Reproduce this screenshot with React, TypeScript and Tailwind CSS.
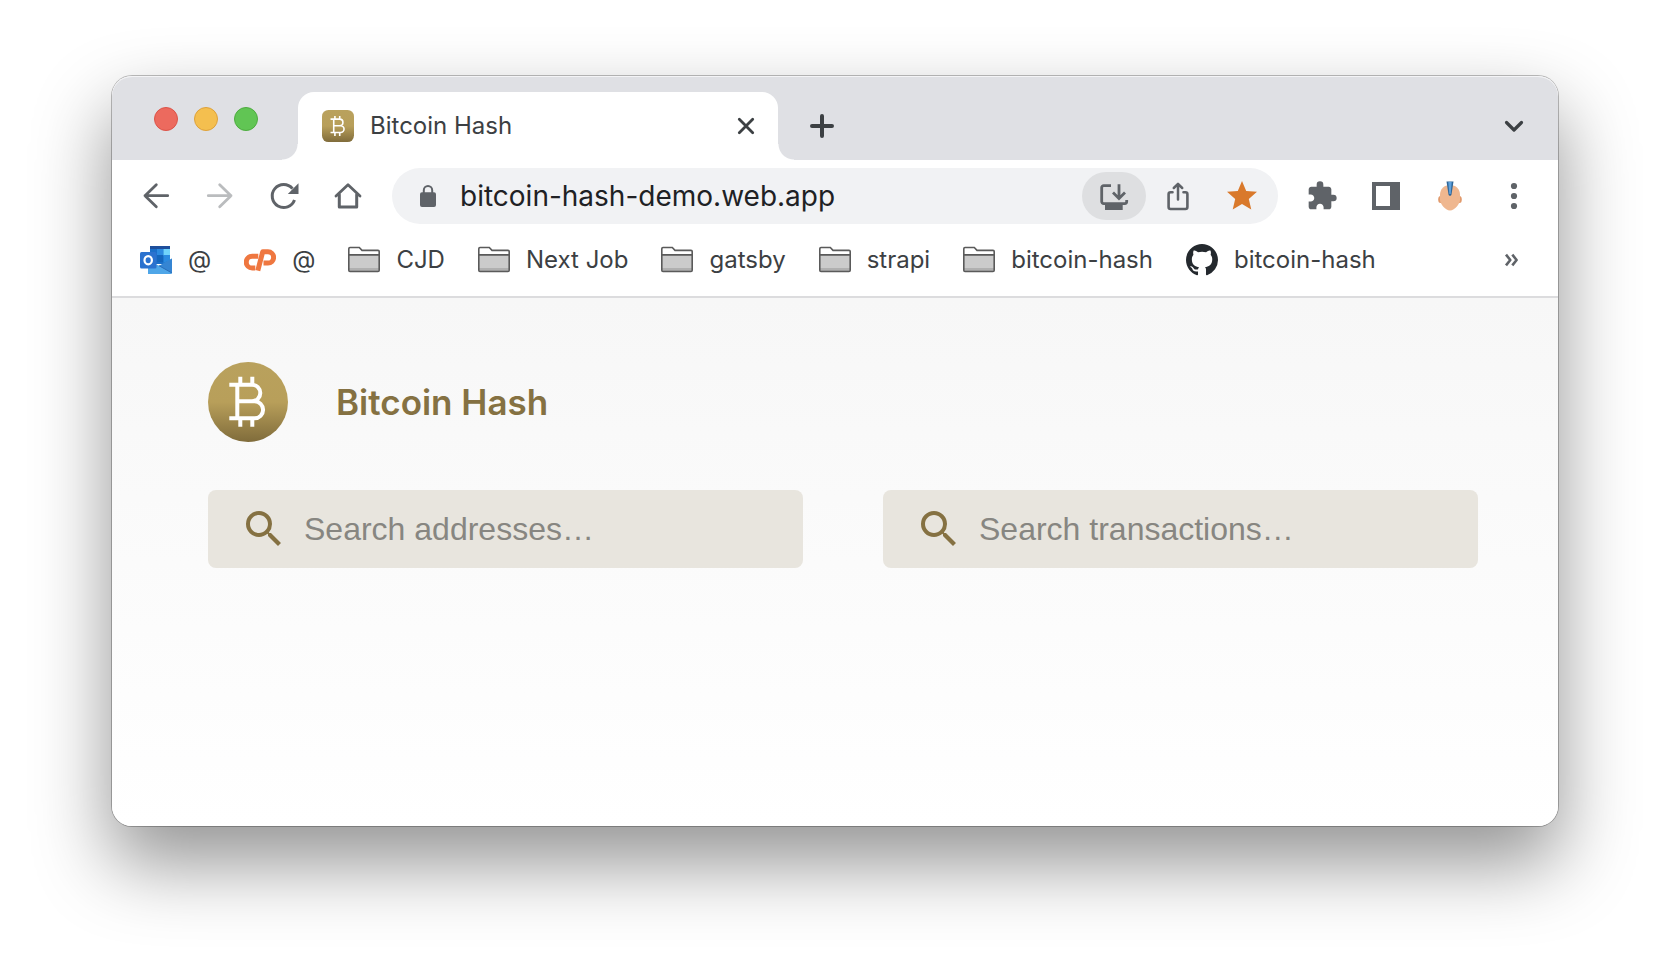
import React, { useId } from "react";
import { MdExtension, MdSearch, MdStar } from "react-icons/md";

function Glyph({ children, className = "" }: { children: React.ReactNode; className?: string }) {
  return (
    <svg
      viewBox="0 0 32 32"
      aria-hidden="true"
      className={`size-8 shrink-0 fill-none stroke-current ${className}`}
      strokeWidth="2.8"
      strokeLinecap="round"
      strokeLinejoin="round"
    >
      {children}
    </svg>
  );
}

function BitcoinMark({ square = false, className }: { square?: boolean; className: string }) {
  const id = useId();
  return (
    <svg viewBox="0 0 80 80" aria-hidden="true" className={`shrink-0 ${className}`}>
      <defs>
        <linearGradient id={id} x1="0" y1="0" x2="0" y2="1">
          <stop offset="0" stopColor="#b9a15d" />
          <stop offset="0.5" stopColor="#b89f5a" />
          <stop offset="1" stopColor="#806c3b" />
        </linearGradient>
      </defs>
      <rect width="80" height="80" rx={square ? 16 : 40} fill={`url(#${id})`} />
      <path
        d="M21.3 22.7H44a8.3 8.3 0 0 1 0 16.6H30M44 39.3h2.6a8.5 8.5 0 0 1 0 17H21.3M29.3 22.7v33.6M32.3 14.7v8M44.3 14.7v8M32.3 56.3v8.4M44.3 56.3v8.4"
        fill="none"
        stroke="#fff"
        strokeWidth="4"
      />
    </svg>
  );
}

function FolderIcon() {
  return (
    <svg viewBox="0 0 32 32" aria-hidden="true" className="size-8 shrink-0">
      <path d="M1 11h30v13H1z" fill="#cbcbcb" />
      <path d="M1 24h30v2.500H1z" fill="#b0b0b0" />
      <path
        d="M.8 26V4.500c0-.8.500-1.200 1.200-1.200h9.300L14 6.200h16c.8 0 1.200.4 1.200 1.200V26c0 .8-.4 1.200-1.200 1.200H2c-.7 0-1.200-.4-1.200-1.200zM1 10.700h30"
        transform="translate(0 .2)"
        fill="none"
        stroke="#5a5a5a"
        strokeWidth="1.600"
      />
    </svg>
  );
}

function OutlookIcon() {
  return (
    <svg viewBox="0 0 32 32" aria-hidden="true" className="size-8 shrink-0">
      <path d="M10 3.500A1.500 1.500 0 0 1 11.500 2h17A1.500 1.500 0 0 1 30 3.500V20H10z" fill="#1a6fc9" />
      <path d="M10 2h20v3H10z" fill="#1e4f9c" />
      <path d="M17 5h6.500v6H17z" fill="#2c8ae0" />
      <path d="M23.500 5H30v7h-6.500z" fill="#70d4fb" />
      <path d="M17 11h6.500v7H17z" fill="#1466bd" />
      <path d="M23.500 11H30v5l-6.500 3z" fill="#2b8be0" />
      <path d="M8 17l12 5 12-7.500V28.500a1.500 1.500 0 0 1-1.500 1.500H8z" fill="#4fa6e8" />
      <path d="M32 14.500V29L19 21.700z" fill="#3585d3" />
      <path d="M19 21.700 32 29" fill="none" stroke="#2a6db8" strokeWidth="1" />
      <rect x="0" y="8" width="16.500" height="16.500" rx="1.500" fill="#2b72cf" />
      <ellipse cx="8.200" cy="16.200" rx="3.700" ry="4.100" fill="none" stroke="#fff" strokeWidth="2.200" />
    </svg>
  );
}

function CpanelIcon() {
  return (
    <svg
      viewBox="0 0 32 32"
      aria-hidden="true"
      className="size-8 shrink-0 fill-none stroke-[#ef7740]"
      strokeWidth="5"
      strokeLinejoin="round"
    >
      <path d="M14.300 12.200H8.200a5.800 5.800 0 0 0 0 11.900h3.100" />
      <path d="M13.800 26.700 18.700 7.800H24a5.500 5.500 0 0 1 0 11.200h-4.500" />
    </svg>
  );
}

function GithubIcon() {
  return (
    <svg viewBox="0 0 16 16" aria-hidden="true" className="size-8 shrink-0 fill-[#24292e]">
      <path d="M8 0C3.58 0 0 3.58 0 8c0 3.54 2.29 6.53 5.47 7.59.4.07.55-.17.55-.38 0-.19-.01-.82-.01-1.49-2.01.37-2.53-.49-2.69-.94-.09-.23-.48-.94-.82-1.13-.28-.15-.68-.52-.01-.53.63-.01 1.08.58 1.23.82.72 1.21 1.87.87 2.33.66.07-.52.28-.87.51-1.07-1.78-.2-3.64-.89-3.64-3.95 0-.87.31-1.59.82-2.15-.08-.2-.36-1.02.08-2.12 0 0 .67-.21 2.2.82.64-.18 1.32-.27 2-.27.68 0 1.36.09 2 .27 1.53-1.04 2.2-.82 2.2-.82.44 1.1.16 1.92.08 2.12.51.56.82 1.27.82 2.15 0 3.07-1.87 3.75-3.65 3.95.29.25.54.73.54 1.48 0 1.07-.01 1.93-.01 2.2 0 .21.15.46.55.38A8.013 8.013 0 0 0 16 8c0-4.42-3.58-8-8-8z" />
    </svg>
  );
}

function TabStrip() {
  return (
    <header className="flex h-[84px] items-end rounded-t-[20px] bg-[#dfe0e4] pr-7 shadow-[inset_0_1px_0_#f4f4f6]">
      <div className="mb-[29px] flex gap-4 pl-[42px]">
        <button aria-label="Close window" className="size-6 rounded-full border border-[#dc5348] bg-[#ec6a5e]" />
        <button aria-label="Minimize window" className="size-6 rounded-full border border-[#dea13a] bg-[#f4bf4f]" />
        <button aria-label="Zoom window" className="size-6 rounded-full border border-[#4dac3f] bg-[#61c554]" />
      </div>
      <span className="ml-6 size-4 bg-[radial-gradient(circle_at_0_0,#dfe0e4_15px,#fff_16px)]" />
      <div className="flex h-[68px] w-[480px] items-center gap-4 rounded-t-2xl bg-white pr-4 pl-6">
        <BitcoinMark square className="size-8" />
        <span className="flex-1 text-2xl text-[#3c4043]">Bitcoin Hash</span>
        <button aria-label="Close tab" className="text-[#3c4043]">
          <Glyph>
            <path d="m9.300 9.300 13.400 13.400m0-13.400L9.300 22.700" />
          </Glyph>
        </button>
      </div>
      <span className="size-4 bg-[radial-gradient(circle_at_100%_0,#dfe0e4_15px,#fff_16px)]" />
      <button aria-label="New tab" className="mb-[18px] ml-3 text-[#3c4043]">
        <Glyph>
          <path d="M16 6v20M6 16h20" strokeWidth="4" />
        </Glyph>
      </button>
      <button aria-label="Search tabs" className="mb-[18px] ml-auto text-[#3c4043]">
        <Glyph>
          <path d="m8.500 12.500 7.500 7.500 7.500-7.500" strokeWidth="3.200" />
        </Glyph>
      </button>
    </header>
  );
}

function Toolbar() {
  return (
    <div className="flex items-center gap-8 pt-2 pr-7 pl-7 text-[#5f6368]">
      <button aria-label="Back">
        <Glyph>
          <path d="M27.700 15.700H5M16.300 4.700l-11.300 11 11.300 11" />
        </Glyph>
      </button>
      <button aria-label="Forward" className="text-[#babcbe]">
        <Glyph>
          <path d="M4.300 15.700H27M15.700 4.700l11.300 11-11.300 11" />
        </Glyph>
      </button>
      <button aria-label="Reload">
        <Glyph>
          <path d="M24.500 8.600A11.500 11.500 0 1 0 26.500 20" strokeLinecap="butt" strokeWidth="3" />
          <path d="M30.500 3.300V14H19.800z" fill="currentColor" stroke="none" />
        </Glyph>
      </button>
      <button aria-label="Home">
        <Glyph>
          <path d="M4 16 16 4.800 28 16" />
          <path d="M7.300 14.500V27h17.400V14.500" strokeWidth="3" />
        </Glyph>
      </button>

      <div className="-ml-1 flex h-14 min-w-0 flex-1 items-center rounded-full bg-[#f1f2f4] pr-5 pl-5">
        <Glyph>
          <rect x="8" y="12.300" width="16" height="14.700" rx="2" fill="currentColor" stroke="none" />
          <path d="M11.800 12.500v-2.300a4.200 4.200 0 0 1 8.400 0v2.300" strokeWidth="2" />
        </Glyph>
        <input
          aria-label="Address"
          defaultValue="bitcoin-hash-demo.web.app"
          className="ml-4 min-w-0 flex-1 bg-transparent text-[28px] text-[#202124] outline-none"
        />
        <button aria-label="Install app" className="flex h-12 w-16 items-center justify-center rounded-full bg-[#dedfe1]">
          <Glyph>
            <path
              d="M13 5.600H5.700A2 2 0 0 0 3.700 7.600v14a2 2 0 0 0 2 2h21a2 2 0 0 0 2-2V20M21 4.300v14M15 12.500l6 6 6-6"
              strokeLinecap="butt"
              strokeLinejoin="miter"
            />
            <path d="M7 25h17.700v5H7z" fill="currentColor" stroke="none" />
          </Glyph>
        </button>
        <button aria-label="Share" className="ml-4">
          <Glyph>
            <path d="M10.500 12.200H8.600a2 2 0 0 0-2 2V27a2 2 0 0 0 2 2h14.800a2 2 0 0 0 2-2V14.200a2 2 0 0 0-2-2h-1.900" strokeWidth="2.600" />
            <path d="M16 19.500V4.500M11.800 8 16 3.800 20.200 8" strokeWidth="2.500" />
          </Glyph>
        </button>
        <button aria-label="Edit bookmark" className="ml-[30px] -mr-0.5 text-[#d9792b]">
          <MdStar className="size-9" />
        </button>
      </div>

      <button aria-label="Extensions" className="-ml-1">
        <MdExtension className="size-8" />
      </button>
      <button aria-label="Side panel">
        <svg viewBox="0 0 32 32" aria-hidden="true" className="size-8 fill-current">
          <path fillRule="evenodd" d="M2 2h28v28H2zM6 6v20h14V6z" />
        </svg>
      </button>
      <button aria-label="Profile">
        <svg viewBox="0 0 32 32" aria-hidden="true" className="size-8">
          <ellipse cx="6.500" cy="19.500" rx="2.300" ry="3.500" fill="#e19a6c" />
          <ellipse cx="25.500" cy="19.500" rx="2.300" ry="3.500" fill="#e19a6c" />
          <path d="M16 5c6 0 10 4 10 10v5c0 3.500-5 10.500-10 10.500S6 23.500 6 20v-5C6 9 10 5 16 5z" fill="#efb78f" />
          <path d="M12.500 1.500h7l-2 13c-.3 1.800-2.700 1.800-3 0z" fill="#2f6698" />
          <path d="M14.300 2h3.400l-1 12h-1.400z" fill="#5fa2dc" />
        </svg>
      </button>
      <button aria-label="Menu">
        <svg viewBox="0 0 32 32" aria-hidden="true" className="size-8 fill-current">
          <circle cx="16" cy="6" r="3.100" />
          <circle cx="16" cy="16" r="3.100" />
          <circle cx="16" cy="26" r="3.100" />
        </svg>
      </button>
    </div>
  );
}

const bookmarks: { label: string; icon: React.ReactNode }[] = [
  { label: "@", icon: <OutlookIcon /> },
  { label: "@", icon: <CpanelIcon /> },
  { label: "CJD", icon: <FolderIcon /> },
  { label: "Next Job", icon: <FolderIcon /> },
  { label: "gatsby", icon: <FolderIcon /> },
  { label: "strapi", icon: <FolderIcon /> },
  { label: "bitcoin-hash", icon: <FolderIcon /> },
  { label: "bitcoin-hash", icon: <GithubIcon /> },
];

function BookmarksBar() {
  return (
    <nav aria-label="Bookmarks" className="flex h-[74px] items-center gap-[33px] border-b-2 border-[#dcdcde] pr-7 pl-7 text-2xl text-[#3c4043]">
      {bookmarks.map((item, index) => (
        <a key={index} href="#" className="flex items-center gap-4 whitespace-nowrap">
          {item.icon}
          {item.label}
        </a>
      ))}
      <button aria-label="More bookmarks" className="ml-auto text-[#5f6368]">
        <Glyph>
          <path d="m8 10.600 4.300 5.400-4.300 5.400M14.300 10.600l4.300 5.400-4.300 5.400" strokeWidth="2.600" strokeLinecap="butt" />
        </Glyph>
      </button>
    </nav>
  );
}

function SearchField({ label }: { label: string }) {
  return (
    <label className="flex h-[78px] min-w-0 flex-1 items-center gap-4 rounded-lg bg-[#e8e5de] px-8">
      <MdSearch className="size-12 shrink-0 text-[#857142]" />
      <input
        type="text"
        aria-label={label}
        placeholder={label}
        className="min-w-0 flex-1 bg-transparent font-['Liberation_Sans',sans-serif] text-[32px] text-[#857142] outline-none placeholder:text-[#878681]"
      />
    </label>
  );
}

export default function App() {
  return (
    <div className="min-h-screen overflow-hidden bg-white px-28 pt-[76px] pb-[148px] font-[Inter,sans-serif]">
      <div className="rounded-[20px] bg-white shadow-[0_0_0_1px_rgba(0,0,0,0.25),0_36px_76px_2px_rgba(0,0,0,0.42)]">
        <TabStrip />
        <Toolbar />
        <BookmarksBar />
        <main className="min-h-[528px] rounded-b-[20px] bg-linear-to-b from-[#f7f7f7] to-white pt-16 pr-20 pl-24">
          <div className="flex items-center gap-12">
            <BitcoinMark className="size-20" />
            <h1 className="text-[35px] font-semibold text-[#857142]">Bitcoin Hash</h1>
          </div>
          <div className="mt-12 flex gap-20">
            <SearchField label="Search addresses…" />
            <SearchField label="Search transactions…" />
          </div>
        </main>
      </div>
    </div>
  );
}
